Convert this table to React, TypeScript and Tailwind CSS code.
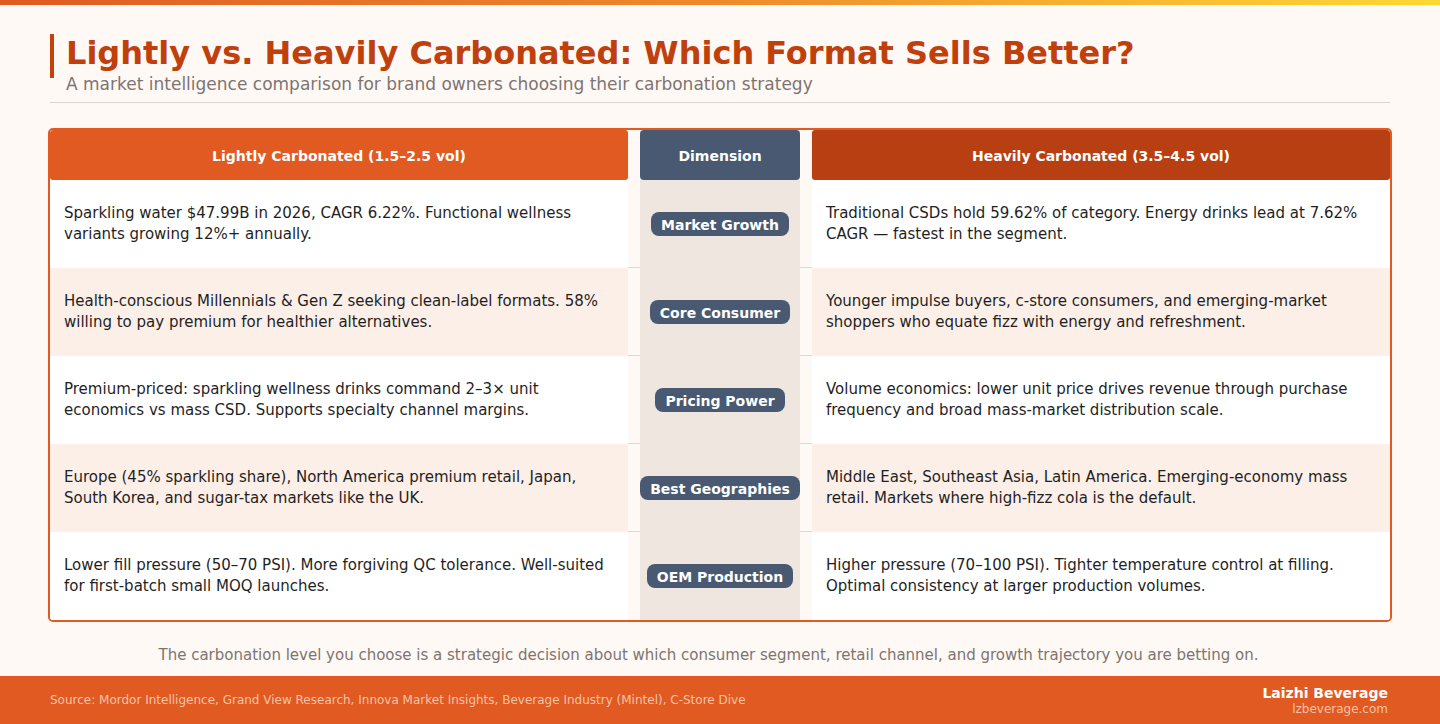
const rows = [
  {
    dim: "Market Growth",
    light:
      "Sparkling water $47.99B in 2026, CAGR 6.22%. Functional wellness variants growing 12%+ annually.",
    heavy:
      "Traditional CSDs hold 59.62% of category. Energy drinks lead at 7.62% CAGR — fastest in the segment.",
  },
  {
    dim: "Core Consumer",
    light:
      "Health-conscious Millennials & Gen Z seeking clean-label formats. 58% willing to pay premium for healthier alternatives.",
    heavy:
      "Younger impulse buyers, c-store consumers, and emerging-market shoppers who equate fizz with energy and refreshment.",
  },
  {
    dim: "Pricing Power",
    light:
      "Premium-priced: sparkling wellness drinks command 2–3× unit economics vs mass CSD. Supports specialty channel margins.",
    heavy:
      "Volume economics: lower unit price drives revenue through purchase frequency and broad mass-market distribution scale.",
  },
  {
    dim: "Best Geographies",
    light:
      "Europe (45% sparkling share), North America premium retail, Japan, South Korea, and sugar-tax markets like the UK.",
    heavy:
      "Middle East, Southeast Asia, Latin America. Emerging-economy mass retail. Markets where high-fizz cola is the default.",
  },
  {
    dim: "OEM Production",
    light:
      "Lower fill pressure (50–70 PSI). More forgiving QC tolerance. Well-suited for first-batch small MOQ launches.",
    heavy:
      "Higher pressure (70–100 PSI). Tighter temperature control at filling. Optimal consistency at larger production volumes.",
  },
];

export default function App() {
  return (
    <div className="w-[1440px] h-[724px] flex flex-col bg-[#fff9f6] font-['DejaVu_Sans',sans-serif] overflow-hidden">
      {/* top gradient strip */}
      <div className="h-[5px] bg-gradient-to-r from-[#e05a22] via-[#ee8a2a] to-[#fdd835]" />

      <div className="px-[50px] pt-[29px] flex flex-col">
        {/* Title block */}
        <div className="h-[44px] border-l-4 border-[#c2410c] pl-3 flex items-start">
          <h1 className="text-[32px] leading-[38px] font-bold text-[#c0400d]">
            Lightly vs. Heavily Carbonated: Which Format Sells Better?
          </h1>
        </div>
        <p className="pl-4 mt-[-4px] text-[17px] leading-[20px] text-[#7d7470]">
          A market intelligence comparison for brand owners choosing their carbonation strategy
        </p>
        <div className="h-px bg-[#ddd3cf] mt-[8px]" />

        {/* Comparison table */}
        <div className="mt-[25px] mx-[-2px] border-2 border-[#e05a22] rounded-[5px] overflow-hidden">
          <div className="grid grid-cols-[1fr_12px_160px_12px_1fr]">
            <div className="h-[50px] bg-[#e05a22] rounded-[3px] flex items-center justify-center pt-[3px] text-[14px] font-bold text-white">
              Lightly Carbonated (1.5–2.5 vol)
            </div>
            <div />
            <div className="h-[50px] bg-[#485971] rounded-[4px] flex items-center justify-center pt-[3px] text-[14px] font-bold text-white">
              Dimension
            </div>
            <div />
            <div className="h-[50px] bg-[#b83f12] rounded-[3px] flex items-center justify-center pt-[3px] text-[14px] font-bold text-white">
              Heavily Carbonated (3.5–4.5 vol)
            </div>

            {rows.map((r, i) => {
              const rowBg = i % 2 === 0 ? "bg-white" : "bg-[#fcefe8]";
              const last = i === rows.length - 1;
              const line = last ? "" : "border-b border-[#ecd3c3]";
              return (
                <div key={r.dim} className="contents">
                  <div
                    className={`${rowBg} h-[88px] px-[14px] flex items-center text-[15px] leading-[21px] text-[#1f1f1f]`}
                  >
                    {r.light}
                  </div>
                  <div className={line} />
                  <div className="bg-[#efe6e0] flex items-center justify-center">
                    <span className="bg-[#485971] text-white text-[14px] font-bold rounded-[8px] px-[10px] h-[24px] pt-[2px] flex items-center">
                      {r.dim}
                    </span>
                  </div>
                  <div className={line} />
                  <div
                    className={`${rowBg} h-[88px] px-[14px] flex items-center text-[15px] leading-[21px] text-[#1f1f1f]`}
                  >
                    {r.heavy}
                  </div>
                </div>
              );
            })}
          </div>
        </div>

        {/* Takeaway */}
        <p className="mt-[23px] pr-[23px] text-center text-[15px] leading-[20px] text-[#7d7470]">
          The carbonation level you choose is a strategic decision about which consumer segment, retail channel, and growth trajectory you are betting on.
        </p>
      </div>

      {/* Footer */}
      <div className="mt-auto h-[48px] bg-[#e05a22] pl-[50px] pr-[52px] flex items-center justify-between">
        <span className="text-[12px] text-[#f6c3a7]">
          Source: Mordor Intelligence, Grand View Research, Innova Market Insights, Beverage Industry (Mintel), C-Store Dive
        </span>
        <div className="flex flex-col items-end leading-none">
          <span className="text-[14px] font-bold text-white leading-[17px]">Laizhi Beverage</span>
          <span className="text-[12px] text-[#f6c3a7] leading-[14px]">lzbeverage.com</span>
        </div>
      </div>
    </div>
  );
}
